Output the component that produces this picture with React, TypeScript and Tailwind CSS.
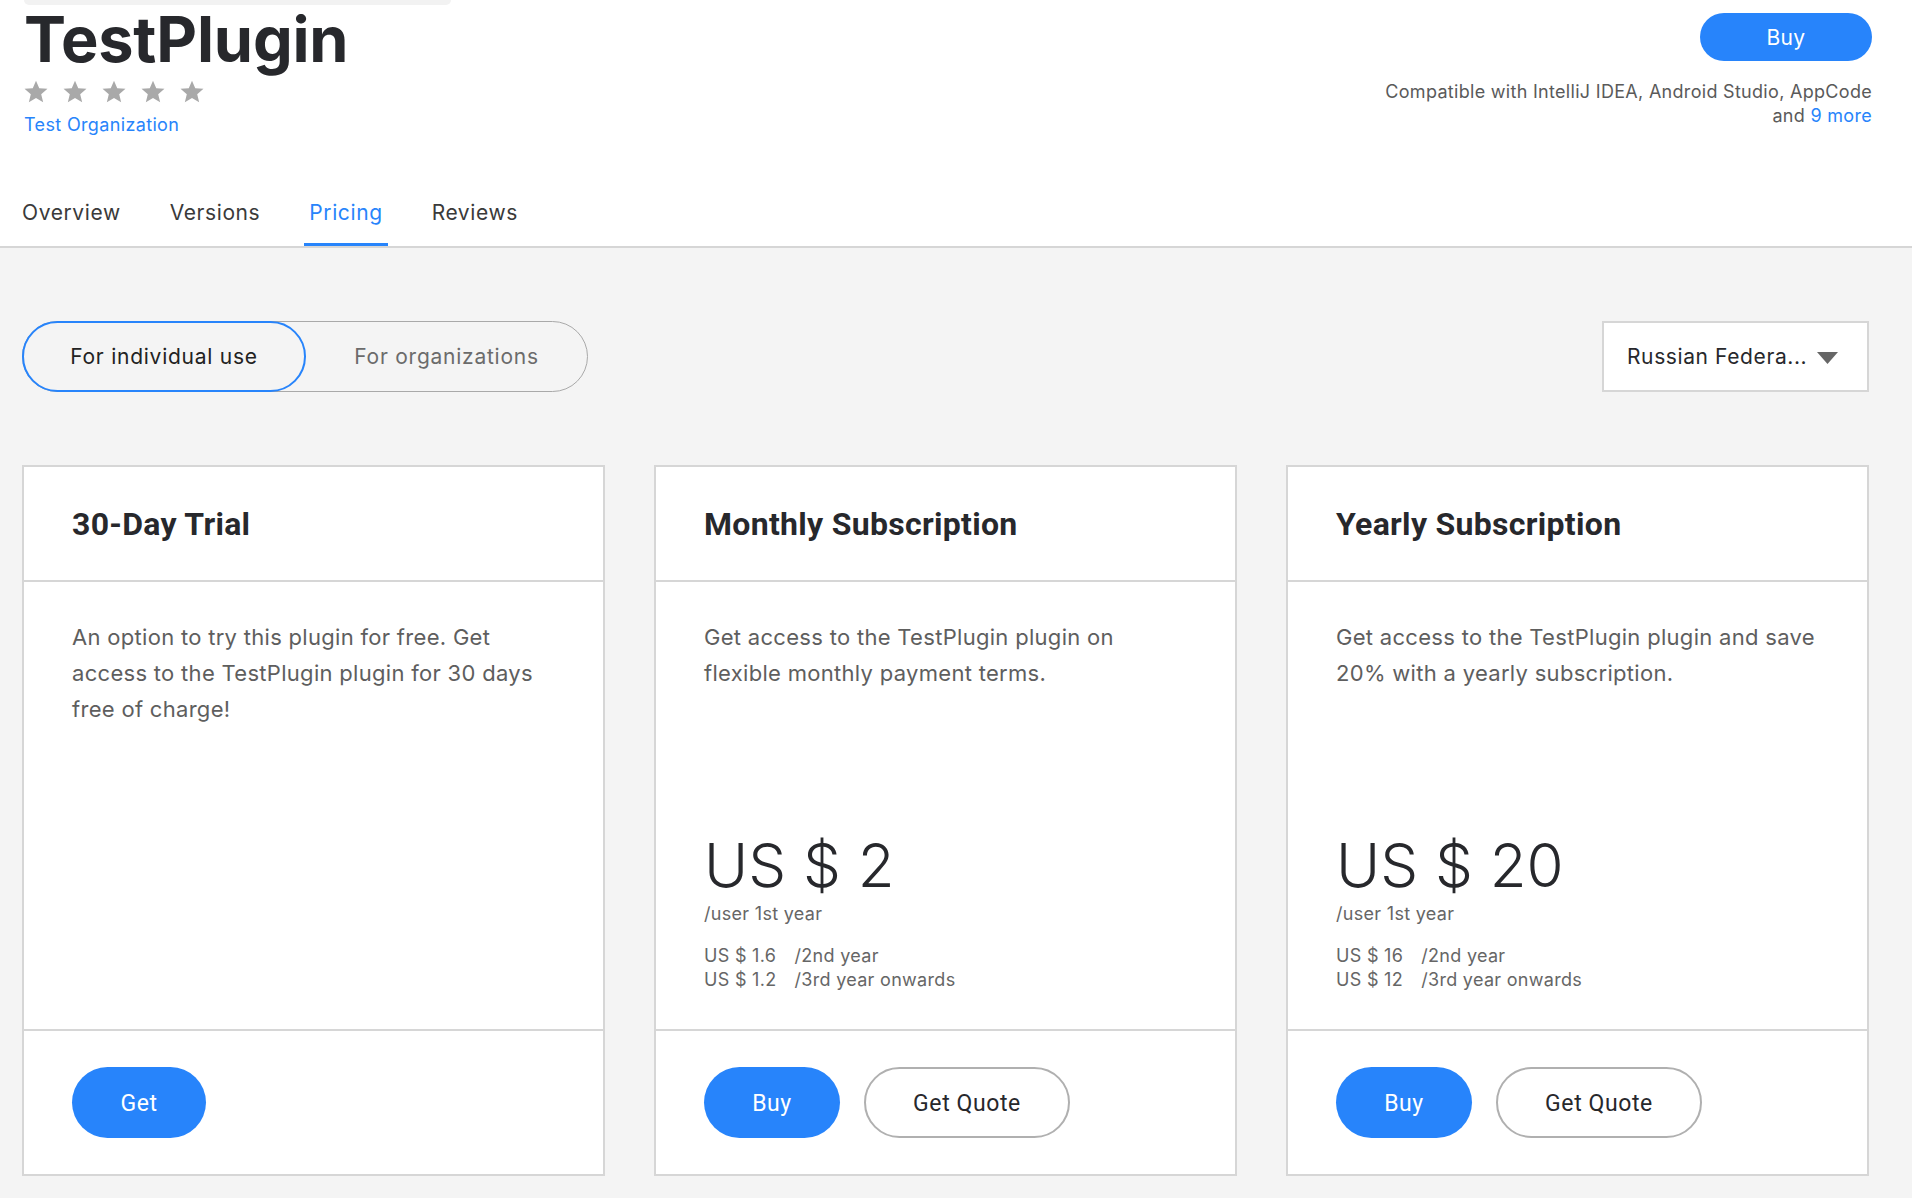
import React from "react";

const BLUE = "bg-[#2784fb]";

function Star() {
  return (
    <svg width="26" height="26" viewBox="0 0 24 24" className="block">
      <path
        d="M12 1.5l3 7 7.6.6-5.8 5 1.8 7.4L12 17.6l-6.6 3.9 1.8-7.4-5.8-5 7.6-.6z"
        fill="#a9a9a9"
      />
    </svg>
  );
}

type Plan = {
  title: string;
  desc: string;
  price?: string;
  rows?: [string, string][];
  buttons: string[];
};

const plans: Plan[] = [
  {
    title: "30-Day Trial",
    desc: "An option to try this plugin for free. Get access to the TestPlugin plugin for 30 days free of charge!",
    buttons: ["Get"],
  },
  {
    title: "Monthly Subscription",
    desc: "Get access to the TestPlugin plugin on flexible monthly payment terms.",
    price: "US $ 2",
    rows: [
      ["US $ 1.6", "/2nd year"],
      ["US $ 1.2", "/3rd year onwards"],
    ],
    buttons: ["Buy", "Get Quote"],
  },
  {
    title: "Yearly Subscription",
    desc: "Get access to the TestPlugin plugin and save 20% with a yearly subscription.",
    price: "US $ 20",
    rows: [
      ["US $ 16", "/2nd year"],
      ["US $ 12", "/3rd year onwards"],
    ],
    buttons: ["Buy", "Get Quote"],
  },
];

function Card({ plan }: { plan: Plan }) {
  return (
    <div className="flex h-[711px] flex-col border-2 border-[#d6d6d6] bg-white">
      <div className="flex h-[115px] items-center border-b-2 border-[#d6d6d6] px-[48px]">
        <h2 className="font-['Roboto',sans-serif] text-[32px] font-bold leading-[40px] tracking-[0.3px] text-[#27282c]">
          {plan.title}
        </h2>
      </div>
      <div className="flex flex-1 flex-col justify-between pl-[48px] pr-[44px] pt-[37px] pb-[37px]">
        <p className="text-[22px] leading-[36px] tracking-[0.3px] text-[#5e5e5e]">{plan.desc}</p>
        {plan.price && (
          <div>
            <div className="text-[60px] font-light leading-none text-[#27282c]">{plan.price}</div>
            <div className="mt-[7px] text-[18px] leading-[24px] tracking-[0.3px] text-[#666666]">/user 1st year</div>
            <div className="mt-[18px] grid w-fit grid-cols-[auto_auto] gap-x-[18px] text-[18px] leading-[24px] tracking-[0.3px] text-[#666666]">
              {plan.rows!.map(([a, b]) => (
                <React.Fragment key={a}>
                  <span>{a}</span>
                  <span>{b}</span>
                </React.Fragment>
              ))}
            </div>
          </div>
        )}
      </div>
      <div className="flex h-[145px] items-center gap-[24px] border-t-2 border-[#d6d6d6] px-[48px]">
        {plan.buttons.map((b) =>
          b === "Get Quote" ? (
            <button
              key={b}
              className="flex h-[71px] w-[206px] items-center justify-center rounded-full border-2 border-[#b0b0b0] bg-white pt-[3px] font-['Roboto',sans-serif] text-[23px] tracking-[0.6px] text-[#27282c]"
            >
              {b}
            </button>
          ) : (
            <button
              key={b}
              className={`flex h-[71px] ${b === "Get" ? "w-[134px]" : "w-[136px]"} items-center justify-center rounded-full ${BLUE} pt-[3px] font-['Roboto',sans-serif] text-[23px] tracking-[0.6px] text-white`}
            >
              {b}
            </button>
          )
        )}
      </div>
    </div>
  );
}

export default function App() {
  const tabs = ["Overview", "Versions", "Pricing", "Reviews"];
  return (
    <div className="min-h-screen w-full bg-[#f4f4f4] font-['Inter','Noto_Sans',sans-serif] antialiased">
      <header className="border-b-2 border-[#d6d6d6] bg-white">
        <div className="flex justify-between pl-[24px] pr-[40px]">
          <div className="flex flex-col">
            <div className="h-[5px] w-[427px] rounded-b-[6px] bg-[#f2f2f2]" />
            <h1 className="mt-[3px] text-[63px] font-bold leading-none tracking-[-0.2px] text-[#27282c]">
              TestPlugin
            </h1>
            <div className="mt-[8px] flex gap-[13px] -ml-[1px]">
              <Star />
              <Star />
              <Star />
              <Star />
              <Star />
            </div>
            <a className="mt-[8px] text-[18px] leading-[24px] tracking-[0.35px] text-[#2784fb]">Test Organization</a>
          </div>
          <div className="flex flex-col items-end pt-[13px]">
            <button className={`h-[48px] w-[172px] rounded-full ${BLUE} pt-[2px] text-[21px] tracking-[0.3px] text-white`}>
              Buy
            </button>
            <div className="mt-[19px] text-right text-[18px] leading-[24px] tracking-[0.3px] text-[#5a5a5a]">
              <div>Compatible with IntelliJ IDEA, Android Studio, AppCode</div>
              <div>
                and <span className="text-[#2784fb]">9 more</span>
              </div>
            </div>
          </div>
        </div>
        <nav className="mt-[61px] flex gap-[39px] pl-[17px]">
          {tabs.map((t) => (
            <div
              key={t}
              className={`border-b-[3px] px-[5px] pb-[15px] text-[21px] leading-[30px] tracking-[0.6px] ${
                t === "Pricing" ? "border-[#2784fb] text-[#2784fb]" : "border-transparent text-[#3a3a3a]"
              }`}
            >
              {t}
            </div>
          ))}
        </nav>
      </header>

      <main className="pl-[22px] pr-[43px] pt-[73px] pb-[21px]">
        <div className="flex items-center justify-between">
          <div className="flex h-[71px] w-[566px] rounded-full border border-[#a9a9a9]">
            <div className="-my-px -ml-px flex w-[284px] items-center justify-center rounded-full border-2 border-[#2784fb] text-[21px] tracking-[0.75px] text-[#222222]">
              For individual use
            </div>
            <div className="flex flex-1 items-center justify-center text-[21px] tracking-[0.75px] text-[#6b6b6b]">
              For organizations
            </div>
          </div>
          <div className="flex h-[71px] w-[267px] items-center border-2 border-[#d6d6d6] bg-white pl-[23px]">
            <span className="text-[21px] tracking-[0.6px] text-[#27282c]">Russian Federa...</span>
            <svg width="21" height="12" viewBox="0 0 21 12" className="ml-[10px] mt-[2px]">
              <path d="M0 0h21L10.5 12z" fill="#666666" />
            </svg>
          </div>
        </div>

        <div className="mt-[73px] grid grid-cols-3 gap-[49px]">
          {plans.map((p) => (
            <Card key={p.title} plan={p} />
          ))}
        </div>
      </main>
    </div>
  );
}
